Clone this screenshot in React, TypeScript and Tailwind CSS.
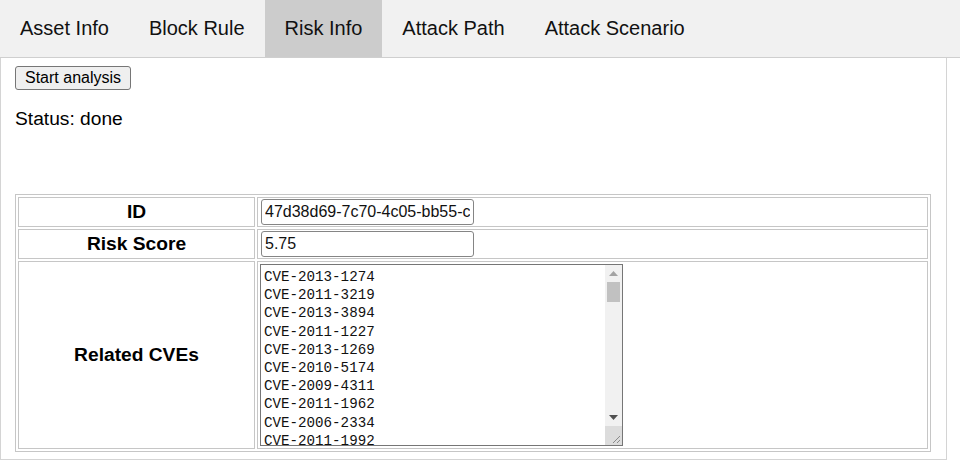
import { useState } from "react";

const tabs = ["Asset Info", "Block Rule", "Risk Info", "Attack Path", "Attack Scenario"];

const cves = [
  "CVE-2013-1274",
  "CVE-2011-3219",
  "CVE-2013-3894",
  "CVE-2011-1227",
  "CVE-2013-1269",
  "CVE-2010-5174",
  "CVE-2009-4311",
  "CVE-2011-1962",
  "CVE-2006-2334",
  "CVE-2011-1992",
  "CVE-2012-0158",
  "CVE-2010-3333",
];

function FakeScrollbar() {
  return (
    <div className="absolute right-[1px] top-[1px] bottom-[1px] w-[17px] bg-[#f1f1f1] flex flex-col">
      <div className="h-[17px] flex items-center justify-center">
        <svg width="9" height="5" viewBox="0 0 9 5">
          <path d="M0 5 L4.5 0 L9 5 Z" fill="#a3a3a3" />
        </svg>
      </div>
      <div className="mx-[2px] h-[20px] bg-[#c1c1c1]" />
      <div className="flex-1" />
      <div className="h-[17px] flex items-center justify-center">
        <svg width="9" height="5" viewBox="0 0 9 5">
          <path d="M0 0 L9 0 L4.5 5 Z" fill="#505050" />
        </svg>
      </div>
      <div className="h-[19px] bg-[#dcdcdc] flex items-end justify-end pr-[1px] pb-[1px]">
        <svg width="10" height="10" viewBox="0 0 10 10">
          <path d="M9 2 L2 9 M9 6 L6 9" stroke="#8a8a8a" strokeWidth="1" />
        </svg>
      </div>
    </div>
  );
}

const inputCls =
  "block w-[213px] h-[26px] px-[3px] text-[16px] font-['Liberation_Sans',Arial,sans-serif] border-[1.5px] border-[#858585] rounded-[3px] outline-none bg-white text-[#111]";

export default function App() {
  const [active, setActive] = useState("Risk Info");

  return (
    <div className="w-[960px] h-[472px] bg-white text-black font-['Liberation_Sans',Arial,sans-serif] overflow-hidden">
      <div className="flex bg-[#f1f1f1] border-b border-[#cfcfcf]">
        {tabs.map((t) => (
          <button
            key={t}
            onClick={() => setActive(t)}
            className={
              "px-[20px] py-[17px] text-[20px] leading-[23px] text-[#111] " +
              (active === t ? "bg-[#cccccc]" : "bg-transparent")
            }
          >
            {t}
          </button>
        ))}
      </div>

      <div className="w-[947px] border-x border-b border-[#d4d4d4] pt-[7px] pb-[7px] px-[14px]">
        <button className="block mt-[1px] px-[9px] py-[2px] text-[16px] leading-[18px] bg-[#efefef] border border-[#767676] rounded-[3px] text-black">
          Start analysis
        </button>
        <p className="mt-[18px] text-[19.2px] leading-[22px]">Status: done</p>

        <table className="mt-[64px] w-[916px] border border-[#c6c6c6] border-separate border-spacing-[2px] text-[19.2px]">
          <tbody>
            <tr>
              <th className="w-[237px] h-[30px] border border-[#c6c6c6] font-bold leading-[22px] p-0">ID</th>
              <td className="h-[30px] border border-[#c6c6c6] px-[3px] py-0">
                <input readOnly value="47d38d69-7c70-4c05-bb55-c8a1e0f2d913" className={inputCls} />
              </td>
            </tr>
            <tr>
              <th className="h-[30px] border border-[#c6c6c6] font-bold leading-[22px] p-0">Risk Score</th>
              <td className="h-[30px] border border-[#c6c6c6] px-[3px] py-0">
                <input readOnly value="5.75" className={inputCls} />
              </td>
            </tr>
            <tr>
              <th className="h-[187px] border border-[#c6c6c6] font-bold leading-[22px] p-0">Related CVEs</th>
              <td className="border border-[#c6c6c6] px-[2px] py-[2px]">
                <div className="relative w-[363px] h-[182px]">
                  <textarea
                    readOnly
                    value={cves.join("\n")}
                    className="block w-full h-full resize-none overflow-hidden pl-[3px] pt-[3px] pr-[20px] text-[14.2px] leading-[18.2px] font-['Liberation_Mono','Courier_New',monospace] text-[#111] border border-[#767676] outline-none bg-white"
                  />
                  <FakeScrollbar />
                </div>
              </td>
            </tr>
          </tbody>
        </table>
      </div>
    </div>
  );
}
